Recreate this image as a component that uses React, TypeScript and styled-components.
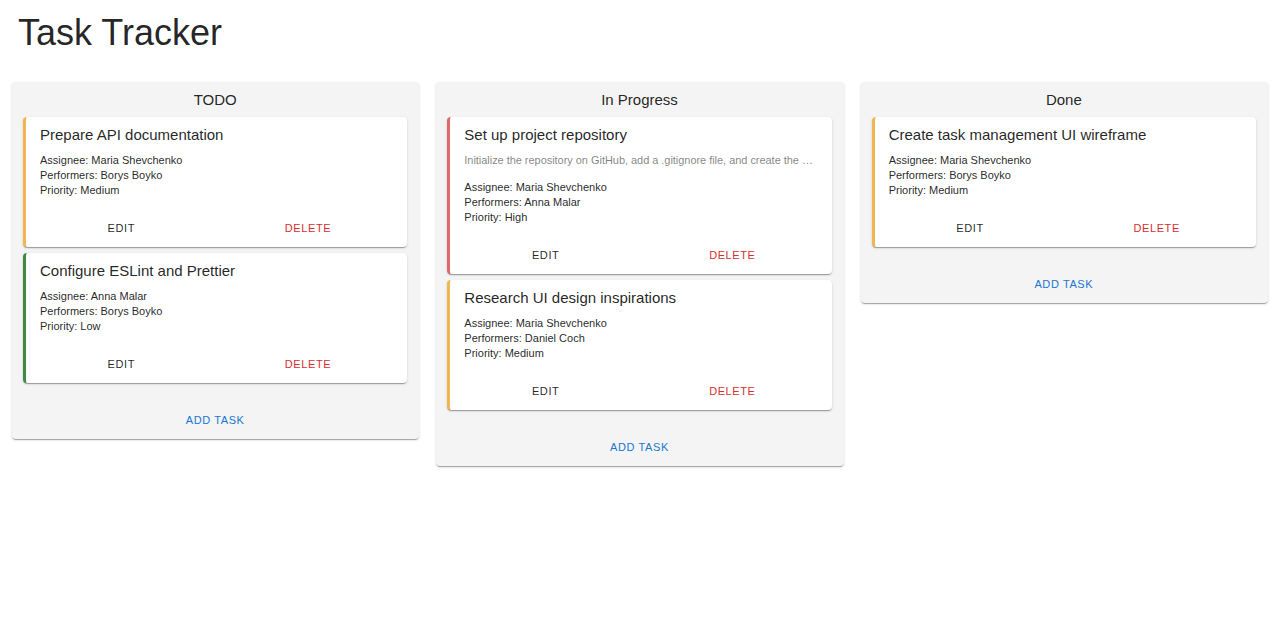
import React from 'react';
import styled, { createGlobalStyle } from 'styled-components';

const GlobalStyle = createGlobalStyle`
  body {
    margin: 0;
    background: #ffffff;
    font-family: 'Liberation Sans', Arial, Helvetica, sans-serif;
    color: rgba(0, 0, 0, 0.87);
  }
`;

const Page = styled.div`
  padding: 12px;
`;

const PageTitle = styled.h1`
  margin: 0 0 28px 6px;
  font-size: 36px;
  line-height: 42px;
  font-weight: 400;
`;

const Board = styled.div`
  display: flex;
  align-items: flex-start;
  gap: 17px;
`;

const Column = styled.div`
  flex: 1 1 0;
  min-width: 0;
  display: flex;
  flex-direction: column;
  padding: 9px 12px 4px 11px;
  background-color: #f4f4f4;
  border-radius: 4px;
  box-shadow: 0 2px 1px -1px rgba(0, 0, 0, 0.2), 0 1px 1px 0 rgba(0, 0, 0, 0.14),
    0 1px 3px 0 rgba(0, 0, 0, 0.12);
`;

const ColumnTitle = styled.div`
  text-align: center;
  font-size: 15px;
  line-height: 18px;
  margin-bottom: 8px;
`;

const CardList = styled.div`
  display: flex;
  flex-direction: column;
  gap: 6px;
`;

interface ICardProps {
  accent: string;
}

const Card = styled.div<ICardProps>`
  background-color: #ffffff;
  border-left: 3px solid ${({ accent }) => accent};
  border-radius: 4px;
  box-shadow: 0 2px 1px -1px rgba(0, 0, 0, 0.2), 0 1px 1px 0 rgba(0, 0, 0, 0.14),
    0 1px 3px 0 rgba(0, 0, 0, 0.12);
  padding-bottom: 4px;
`;

const CardBody = styled.div`
  padding: 9px 14px 15px 14px;
`;

const CardTitle = styled.div`
  font-size: 15px;
  line-height: 18px;
  margin-bottom: 9px;
`;

const Description = styled.div`
  font-size: 11px;
  line-height: 15px;
  letter-spacing: -0.04px;
  color: rgba(0, 0, 0, 0.5);
  white-space: nowrap;
  overflow: hidden;
  text-overflow: ellipsis;
  margin-bottom: 12px;
`;

const Detail = styled.div`
  font-size: 11px;
  line-height: 15px;
  color: rgba(0, 0, 0, 0.87);
`;

const CardActions = styled.div`
  display: flex;
  padding: 0 6px 0 2px;
`;

interface IButtonProps {
  tone: 'default' | 'danger' | 'primary';
}

const toneColor = { default: 'rgba(0, 0, 0, 0.87)', danger: '#d32f2f', primary: '#1976d2' };

const TextButton = styled.button<IButtonProps>`
  flex: 1 1 0;
  height: 30px;
  border: 0;
  background: transparent;
  font-family: inherit;
  font-size: 11px;
  font-weight: 500;
  letter-spacing: 0.6px;
  text-transform: uppercase;
  color: ${({ tone }) => toneColor[tone]};
  cursor: pointer;
  border-radius: 4px;
`;

const AddButton = styled(TextButton)`
  flex: none;
  align-self: center;
  padding: 0 12px;
  margin-top: 22px;
`;

interface ITask {
  title: string;
  description?: string;
  assignee: string;
  performers: string;
  priority: 'Low' | 'Medium' | 'High';
}

const priorityColor = { Low: '#3d8b40', Medium: '#f1b652', High: '#df6a6a' };

const columns: { name: string; tasks: ITask[] }[] = [
  {
    name: 'TODO',
    tasks: [
      { title: 'Prepare API documentation', assignee: 'Maria Shevchenko', performers: 'Borys Boyko', priority: 'Medium' },
      { title: 'Configure ESLint and Prettier', assignee: 'Anna Malar', performers: 'Borys Boyko', priority: 'Low' },
    ],
  },
  {
    name: 'In Progress',
    tasks: [
      {
        title: 'Set up project repository',
        description:
          'Initialize the repository on GitHub, add a .gitignore file, and create the README with setup instructions.',
        assignee: 'Maria Shevchenko',
        performers: 'Anna Malar',
        priority: 'High',
      },
      { title: 'Research UI design inspirations', assignee: 'Maria Shevchenko', performers: 'Daniel Coch', priority: 'Medium' },
    ],
  },
  {
    name: 'Done',
    tasks: [
      { title: 'Create task management UI wireframe', assignee: 'Maria Shevchenko', performers: 'Borys Boyko', priority: 'Medium' },
    ],
  },
];

const TaskCard = ({ task }: { task: ITask }) => (
  <Card accent={priorityColor[task.priority]}>
    <CardBody>
      <CardTitle>{task.title}</CardTitle>
      {task.description && <Description>{task.description}</Description>}
      <Detail>{`Assignee: ${task.assignee}`}</Detail>
      <Detail>{`Performers: ${task.performers}`}</Detail>
      <Detail>{`Priority: ${task.priority}`}</Detail>
    </CardBody>
    <CardActions>
      <TextButton tone="default">Edit</TextButton>
      <TextButton tone="danger">Delete</TextButton>
    </CardActions>
  </Card>
);

export default function App() {
  return (
    <Page>
      <GlobalStyle />
      <PageTitle>Task Tracker</PageTitle>
      <Board>
        {columns.map((col) => (
          <Column key={col.name}>
            <ColumnTitle>{col.name}</ColumnTitle>
            <CardList>
              {col.tasks.map((task) => (
                <TaskCard key={task.title} task={task} />
              ))}
            </CardList>
            <AddButton tone="primary">Add Task</AddButton>
          </Column>
        ))}
      </Board>
    </Page>
  );
}
